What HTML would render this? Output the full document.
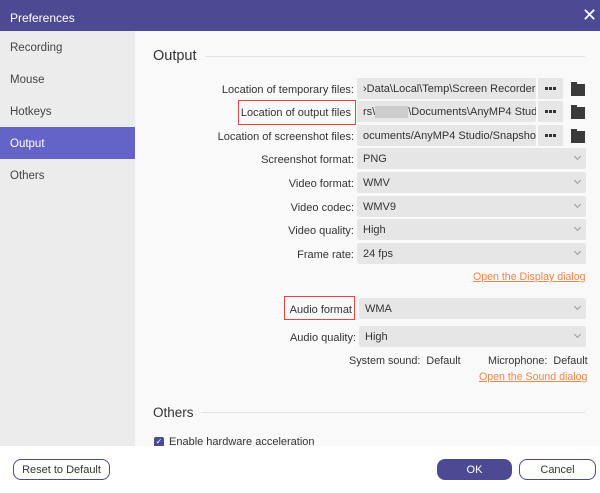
<!DOCTYPE html>
<html><head><style>
body{margin:0;width:600px;height:493px;position:relative;overflow:hidden;font-family:"Liberation Sans",sans-serif;font-size:11px;color:#333;background:#f9f9f9}
.a{position:absolute}
span.a{margin-top:2px}
.title{left:0;top:0;width:600px;height:31px;background:#4b4a93;color:#fff;font-size:12px}
.side{left:0;top:31px;width:135px;height:415px;background:#ececec}
.si{position:absolute;left:10px;font-size:11.5px;color:#444;margin-top:2px}
.lbl{position:absolute;right:246px;text-align:right;white-space:nowrap;font-size:11px;color:#333;margin-top:2px}
.inp{position:absolute;background:#e6e6e6;border-radius:2px;height:21px;line-height:23px;padding-left:6px;box-sizing:border-box;white-space:nowrap;overflow:hidden;font-size:11px;color:#333}
.dd{left:357px;width:229px}
.dd:after{content:"";position:absolute;right:6px;top:6px;width:4px;height:4px;border-right:1px solid #999;border-bottom:1px solid #999;transform:rotate(45deg)}
.dots{position:absolute;left:538px;width:25px;height:21px;background:#e6e6e6}
.dots i{position:absolute;top:9px;width:3px;height:3px;background:#333}
.fold{position:absolute;left:571px;width:14px;height:10px;background:#3a3a3a;border-top:2px solid #3a3a3a}
.fold:before{content:"";position:absolute;left:0;top:-4px;width:6px;height:3px;background:#3a3a3a}
.red{position:absolute;border:1.5px solid #e0464a}
.link{position:absolute;color:#f08548;text-decoration:underline;font-size:10.6px}
.btn{position:absolute;top:459px;height:19px;border:1.5px solid #4b4a93;border-radius:8px;background:#fff;text-align:center;line-height:20px;font-size:11px;color:#333;box-sizing:content-box}
</style></head><body>
<div class="a title"><span class="a" style="left:10px;top:9px">Preferences</span>
<span class="a" style="left:582px;top:3px;font-size:18px;font-weight:300">✕</span></div>
<div class="a side">
<span class="si" style="top:9px">Recording</span>
<span class="si" style="top:41px">Mouse</span>
<span class="si" style="top:73px">Hotkeys</span>
<div class="a" style="left:0;top:96px;width:135px;height:32px;background:#6464c8"></div>
<span class="si" style="top:105px;color:#fff">Output</span>
<span class="si" style="top:137px">Others</span>
</div>
<div class="a" style="left:153px;top:48px;font-size:14.5px;color:#333">Output</div>
<div class="a" style="left:205px;top:56px;width:380px;height:1px;background:#e3e3e3"></div>

<span class="lbl" style="top:82px">Location of temporary files:</span>
<div class="inp" style="left:357px;top:78px;width:179px">›Data\Local\Temp\Screen Recorder</div><div class="dots" style="top:78px"><i style="left:7px"></i><i style="left:11px"></i><i style="left:15px"></i></div><div class="fold" style="top:84px"></div>
<span class="lbl" style="top:105px;right:249px">Location of output files</span>
<div class="red" style="left:238px;top:100px;width:116px;height:23px"></div>
<div class="inp" style="left:357px;top:101px;width:179px">rs\<span style="background:#ccc;color:#ccc">xxxxxx</span>\Documents\AnyMP4 Studio</div><div class="dots" style="top:101px"><i style="left:7px"></i><i style="left:11px"></i><i style="left:15px"></i></div><div class="fold" style="top:107px"></div>
<span class="lbl" style="top:129px">Location of screenshot files:</span>
<div class="inp" style="left:357px;top:125px;width:179px">ocuments/AnyMP4 Studio/Snapshot</div><div class="dots" style="top:125px"><i style="left:7px"></i><i style="left:11px"></i><i style="left:15px"></i></div><div class="fold" style="top:131px"></div>

<span class="lbl" style="top:152px">Screenshot format:</span><div class="inp dd" style="top:148px">PNG</div>
<span class="lbl" style="top:176px">Video format:</span><div class="inp dd" style="top:172px">WMV</div>
<span class="lbl" style="top:200px">Video codec:</span><div class="inp dd" style="top:196px">WMV9</div>
<span class="lbl" style="top:223px">Video quality:</span><div class="inp dd" style="top:219px">High</div>
<span class="lbl" style="top:247px">Frame rate:</span><div class="inp dd" style="top:243px">24 fps</div>
<span class="link" style="left:473px;top:271px">Open the Display dialog</span>

<span class="lbl" style="top:302px;right:248px">Audio format</span>
<div class="red" style="left:284px;top:296px;width:69px;height:22px"></div>
<div class="inp dd" style="top:298px;left:359px;width:227px">WMA</div>
<span class="lbl" style="top:330px;right:244px">Audio quality:</span><div class="inp dd" style="top:326px;left:359px;width:227px">High</div>
<span class="a" style="left:349px;top:353px;font-size:10.8px">System sound:&nbsp; Default</span>
<span class="a" style="left:488px;top:353px;font-size:10.8px">Microphone:&nbsp; Default</span>
<span class="link" style="left:479px;top:371px">Open the Sound dialog</span>

<div class="a" style="left:153px;top:405px;font-size:13.5px;color:#333">Others</div>
<div class="a" style="left:201px;top:412px;width:384px;height:1px;background:#e3e3e3"></div>
<div class="a" style="left:154px;top:437px;width:10px;height:10px;background:#4b4a93;border-radius:2px;color:#fff;font-size:8px;line-height:10px;text-align:center">✓</div>
<span class="a" style="left:169px;top:434px">Enable hardware acceleration</span>

<div class="a" style="left:0;top:446px;width:600px;height:47px;background:#fff"></div>
<div class="btn" style="left:13px;width:95px">Reset to Default</div>
<div class="btn" style="left:437px;width:73px;background:#4b4a93;color:#fff">OK</div>
<div class="btn" style="left:519px;width:75px">Cancel</div>
</body></html>
